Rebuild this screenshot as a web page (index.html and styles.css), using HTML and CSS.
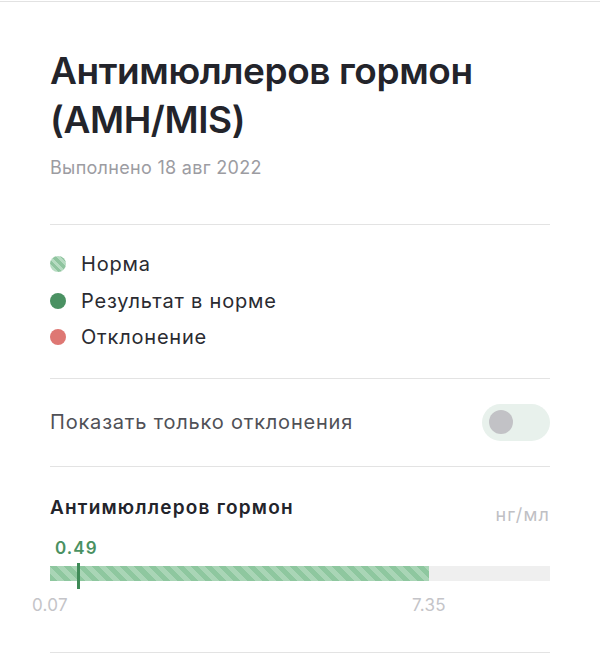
FILE: index.html
```html
<!DOCTYPE html>
<html lang="ru">
<head>
<meta charset="utf-8">
<link rel="stylesheet" href="styles.css">
</head>
<body>
<div class="page">
  <header class="header">
    <h1 class="title">Антимюллеров гормон (AMH/MIS)</h1>
    <div class="date">Выполнено 18 авг 2022</div>
  </header>
  <ul class="legend">
    <li class="legend-item"><span class="dot dot-norm"></span>Норма</li>
    <li class="legend-item"><span class="dot dot-ok"></span>Результат в норме</li>
    <li class="legend-item"><span class="dot dot-bad"></span>Отклонение</li>
  </ul>
  <div class="toggle-row">
    <span class="toggle-label">Показать только отклонения</span>
    <span class="toggle"><span class="knob"></span></span>
  </div>
  <section class="result">
    <div class="result-head">
      <span class="result-name">Антимюллеров гормон</span>
      <span class="result-unit">нг/мл</span>
    </div>
    <div class="result-value">0.49</div>
    <div class="bar">
      <div class="bar-norm" style="width: 75.8%"></div>
      <div class="bar-marker" style="left: 5.4%"></div>
    </div>
    <div class="scale">
      <span class="scale-label" style="left: 0%">0.07</span>
      <span class="scale-label" style="left: 75.8%">7.35</span>
    </div>
  </section>
</div>
</body>
</html>
```

FILE: styles.css
```css
* { box-sizing: border-box; }
html, body { margin: 0; padding: 0; background: #fff; }
body {
  font-family: Inter, "Noto Sans", "Liberation Sans", sans-serif;
  color: #23242b;
  padding-top: 1px;
}
.page {
  border-top: 1px solid #e2e2e2;
  padding: 0 50px;
}
.header {
  padding-top: 44px;
  padding-bottom: 44px;
  border-bottom: 1px solid #e3e3e3;
}
.title {
  margin: 0;
  font-size: 37px;
  line-height: 49px;
  font-weight: 600;
  letter-spacing: -0.4px;
  color: #23242b;
}
.date {
  margin-top: 12px;
  font-size: 18px;
  line-height: 24px;
  letter-spacing: 0.3px;
  color: #9c9ca2;
}
.legend {
  list-style: none;
  margin: 0;
  padding: 21px 0 22px;
  border-bottom: 1px solid #e3e3e3;
}
.legend-item {
  display: flex;
  align-items: center;
  gap: 15px;
  height: 36.5px;
  font-size: 20px;
  letter-spacing: 0.8px;
  color: #2a2b31;
}
.dot {
  width: 16px;
  height: 16px;
  border-radius: 50%;
  flex: none;
}
.dot-norm {
  background: repeating-linear-gradient(45deg, #8fc49f 0 3px, #b6dbc1 3px 6px);
}
.dot-ok { background: #4a9162; }
.dot-bad { background: #de7773; }
.toggle-row {
  display: flex;
  align-items: center;
  justify-content: space-between;
  padding: 25px 0;
  border-bottom: 1px solid #e3e3e3;
}
.toggle-label {
  font-size: 20px;
  letter-spacing: 0.8px;
  color: #505157;
}
.toggle {
  width: 68px;
  height: 37px;
  border-radius: 19px;
  background: #e8f1ec;
  display: flex;
  align-items: center;
  padding-left: 7px;
}
.knob {
  width: 24px;
  height: 24px;
  border-radius: 50%;
  background: #c2c2c6;
}
.result {
  padding: 29px 0 37px;
  border-bottom: 1px solid #e3e3e3;
}
.result-head {
  display: flex;
  justify-content: space-between;
  align-items: flex-start;
}
.result-name {
  font-size: 19px;
  line-height: 24px;
  font-weight: 600;
  letter-spacing: 1.2px;
  color: #23242b;
}
.result-unit {
  margin-top: 7px;
  font-size: 18px;
  line-height: 24px;
  letter-spacing: 1.2px;
  color: #c0c0c4;
}
.result-value {
  margin-top: 11px;
  padding-left: 5px;
  font-size: 17px;
  line-height: 20px;
  font-weight: 600;
  letter-spacing: 1.1px;
  color: #4a9162;
}
.bar {
  position: relative;
  margin-top: 8px;
  height: 15px;
  background: #efefef;
}
.bar-norm {
  height: 100%;
  background: repeating-linear-gradient(45deg, #8ec79f 0 5px, #a9d5b6 5px 10px);
}
.bar-marker {
  position: absolute;
  top: -3px;
  width: 3px;
  height: 26px;
  background: #3e8a57;
}
.scale {
  position: relative;
  margin-top: 14px;
  height: 20px;
}
.scale-label {
  position: absolute;
  top: 0;
  transform: translateX(-50%);
  font-size: 17px;
  line-height: 20px;
  letter-spacing: 0.3px;
  color: #c4c4c8;
}
```
